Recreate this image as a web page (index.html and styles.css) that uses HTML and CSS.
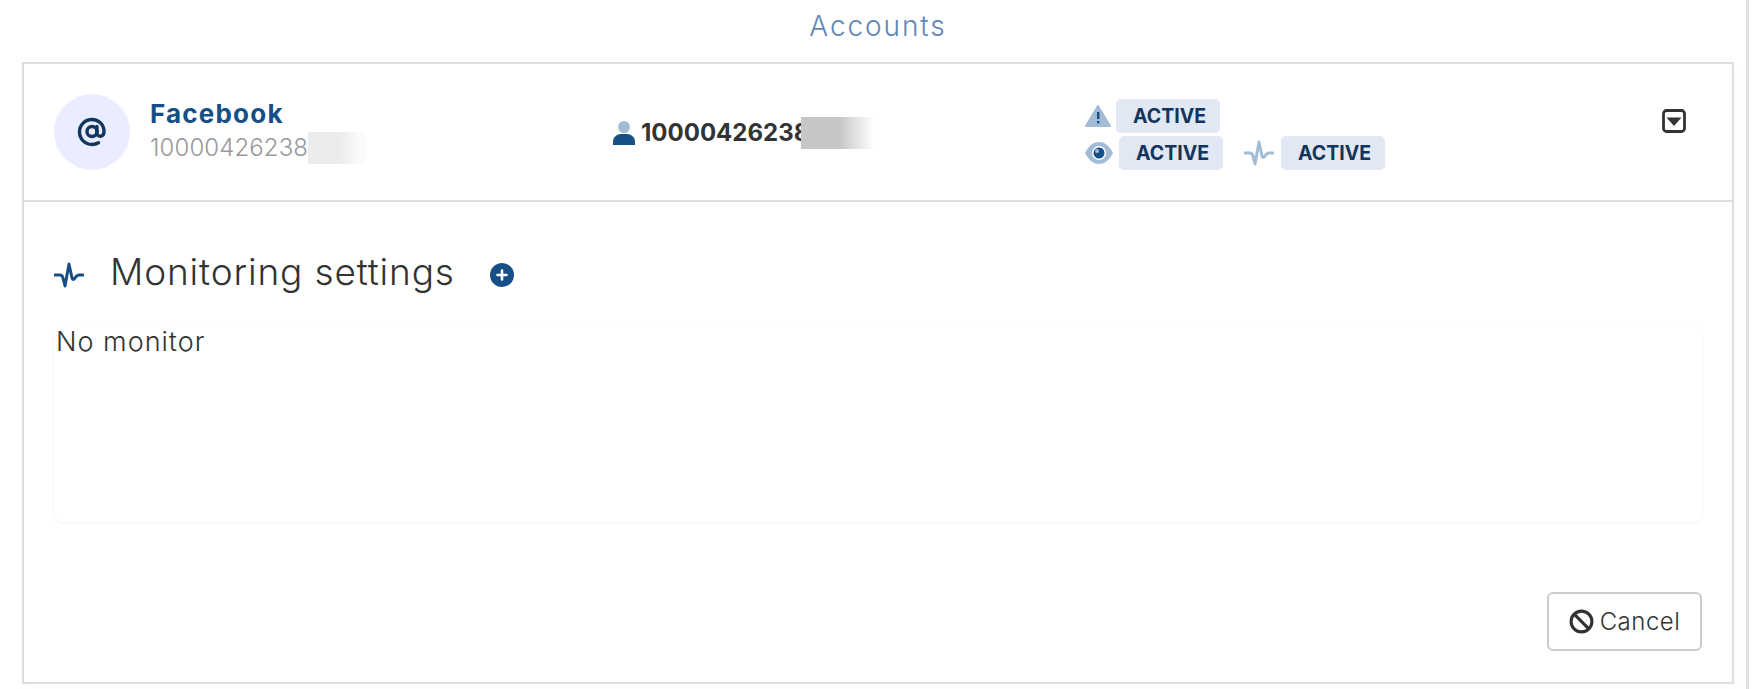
FILE: index.html
```html
<!DOCTYPE html>
<html lang="en">
<head>
  <meta charset="UTF-8">
  <title>Accounts</title>
  <link rel="stylesheet" href="styles.css">
</head>
<body>
  <div class="page">
    <h1 class="page-title">Accounts</h1>

    <div class="account-frame">
      <!-- Account summary -->
      <header class="account-head">
        <div class="account-name">
          <div class="avatar">
            <svg width="30" height="30" viewBox="0 0 30 30" fill="none" stroke="#12355b" stroke-width="3.4" stroke-linecap="round">
              <circle cx="15" cy="14.5" r="5"/>
              <path d="M20 9.5v6.5c0 4.5 7 4.5 7-1.5C27 7.500 21.500 2.500 15 2.500 8 2.500 2.500 8 2.500 15S8 27.500 15 27.500c2.500 0 4.500-.5 6.500-1.700"/>
            </svg>
          </div>
          <div>
            <div class="account-title">Facebook</div>
            <div class="account-id">10000426238<span class="smudge smudge-light"></span></div>
          </div>
        </div>

        <div class="account-user">
          <svg class="user-icon" width="22" height="24" viewBox="0 0 22 24">
            <circle cx="11" cy="6" r="6" fill="#a3bcd6"/>
            <path d="M0 24v-3c0-5 4-8 8-8h6c4 0 8 3 8 8v3z" fill="#164f86"/>
          </svg>
          <span class="user-number">10000426238</span><span class="smudge smudge-dark"></span>
        </div>

        <div class="account-status">
          <div class="status-row">
            <span class="status-item">
              <svg width="26" height="22" viewBox="0 0 26 22">
                <path d="M13 1L25 21H1z" fill="#a3bcd6" stroke="#a3bcd6" stroke-width="2" stroke-linejoin="round"/>
                <rect x="12" y="7" width="2.400" height="7" fill="#164f86"/>
                <rect x="12" y="16" width="2.400" height="2.400" fill="#164f86"/>
              </svg>
              <span class="badge">ACTIVE</span>
            </span>
          </div>
          <div class="status-row">
            <span class="status-item status-eye">
              <svg width="28" height="24" viewBox="0 0 28 24">
                <path d="M0 12C4 4 9 1 14 1s10 3 14 11c-4 8-9 11-14 11S4 20 0 12z" fill="#a3bcd6"/>
                <circle cx="14" cy="12" r="7" fill="#fff"/>
                <circle cx="14" cy="12" r="5.500" fill="#164f86"/>
                <circle cx="12" cy="10" r="2" fill="#a3bcd6"/>
              </svg>
              <span class="badge">ACTIVE</span>
            </span>
            <span class="status-item status-pulse">
              <svg width="30" height="26" viewBox="0 0 30 26" fill="none" stroke="#a3bcd6" stroke-width="3" stroke-linecap="round" stroke-linejoin="round">
                <path d="M1 13h5c1.500 0 2.500 1 3 3l2 8 4-22 3 14c.5 2 1.500 2 3 0 1-1.500 2-3 4-3h4"/>
              </svg>
              <span class="badge">ACTIVE</span>
            </span>
          </div>
        </div>

        <button class="toggle" aria-label="Expand">
          <svg width="24" height="24" viewBox="0 0 24 24">
            <rect x="1.500" y="1.500" width="21" height="21" rx="3" fill="none" stroke="#333" stroke-width="2.800"/>
            <path d="M4.500 8.500h15l-7.500 8.500z" fill="#333"/>
          </svg>
        </button>
      </header>

      <!-- Monitoring -->
      <section class="monitoring">
        <div class="section-head">
          <svg width="30" height="26" viewBox="0 0 30 26" fill="none" stroke="#164f86" stroke-width="3" stroke-linecap="round" stroke-linejoin="round">
            <path d="M1 13h5c1.500 0 2.500 1 3 3l2 8 4-22 3 14c.5 2 1.500 2 3 0 1-1.500 2-3 4-3h4"/>
          </svg>
          <h2 class="section-title">Monitoring settings</h2>
          <svg class="add-icon" width="24" height="24" viewBox="0 0 24 24">
            <circle cx="12" cy="12" r="12" fill="#164f86"/>
            <path d="M12 7.500v9M7.500 12h9" stroke="#fff" stroke-width="2.600" stroke-linecap="round"/>
          </svg>
        </div>

        <div class="monitor-panel">No monitor</div>

        <div class="actions">
          <button class="btn-cancel">
            <svg width="25" height="25" viewBox="0 0 24 24" fill="none" stroke="#333" stroke-width="3">
              <circle cx="12" cy="12" r="10"/>
              <path d="M5 5l14 14"/>
            </svg>
            Cancel
          </button>
        </div>
      </section>
    </div>
  </div>
</body>
</html>
```

FILE: styles.css
```css
html, body {
  margin: 0;
  padding: 0;
  background: #fff;
}

body {
  font-family: "Inter", "Noto Sans", sans-serif;
  color: #333;
}

.page {
  box-sizing: border-box;
  width: 1749px;
  height: 689px;
  padding: 0 12px 0 22px;
  border-right: 3px solid #e0e0e0;
  overflow: hidden;
}

.page-title {
  height: 62px;
  margin: 0;
  padding-top: 9px;
  box-sizing: border-box;
  text-align: center;
  font-size: 28px;
  line-height: 34px;
  font-weight: 300;
  letter-spacing: 1.9px;
  color: #5f86b8;
}

.account-frame {
  height: 622px;
  box-sizing: border-box;
  border: 2px solid #dedede;
  box-shadow: 0 3px 6px rgba(0, 0, 0, 0.02);
}

.account-head {
  display: grid;
  grid-template-columns: 559px 472px 577px 1fr;
  align-items: center;
  height: 138px;
  box-sizing: border-box;
  padding-left: 30px;
  border-bottom: 2px solid #dedede;
}

.account-name {
  display: flex;
  align-items: center;
  gap: 20px;
}

.avatar {
  display: flex;
  align-items: center;
  justify-content: center;
  width: 76px;
  height: 76px;
  border-radius: 50%;
  background: #e9edff;
}

.account-title {
  font-size: 26px;
  line-height: 36px;
  margin-top: -5px;
  font-weight: 700;
  color: #164f86;
  letter-spacing: 1.2px;
}

.account-id {
  display: flex;
  align-items: center;
  font-size: 24px;
  line-height: 32px;
  font-weight: 300;
  letter-spacing: 0.1px;
  color: #999;
}

.smudge {
  display: inline-block;
  height: 32px;
}

.smudge-light {
  width: 57px;
  background: linear-gradient(90deg, #ececec 55%, #fbfbfb 92%);
}

.smudge-dark {
  width: 76px;
  margin-left: -8px;
  background: linear-gradient(90deg, #c6c6c6 50%, #fff 96%);
}

.account-user {
  display: flex;
  align-items: center;
  padding-top: 2px;
}

.user-icon {
  margin-right: 6px;
}

.user-number {
  font-size: 24px;
  font-weight: 700;
  line-height: 30px;
  color: #333;
}

.account-status {
  display: flex;
  flex-direction: column;
  gap: 3px;
  padding-top: 4px;
}

.status-row {
  display: flex;
  gap: 21px;
}

.status-item {
  display: flex;
  align-items: center;
  gap: 5px;
}

.status-eye {
  gap: 6px;
}

.status-pulse {
  gap: 7px;
}

.badge {
  width: 104px;
  height: 34px;
  box-sizing: border-box;
  padding-left: 17px;
  border-radius: 5px;
  background: #e1e7f3;
  color: #12355b;
  font-size: 19.5px;
  font-weight: 700;
  line-height: 34px;
}

.toggle {
  width: 24px;
  height: 24px;
  margin: -22px 0 0 0;
  padding: 0;
  border: none;
  background: none;
}

.monitoring {
  padding: 51px 30px 0;
}

.section-head {
  display: flex;
  align-items: center;
  height: 44px;
}

.section-title {
  margin: 0 35px 6px 26px;
  font-size: 37px;
  line-height: 44px;
  font-weight: 300;
  letter-spacing: 0.85px;
  color: #333;
}

.monitor-panel {
  height: 195px;
  margin-top: 30px;
  padding: 0 2px;
  border-radius: 8px;
  box-shadow: 0 1px 3px rgba(0, 0, 0, 0.06);
  font-size: 27px;
  line-height: 30px;
  font-weight: 300;
  letter-spacing: 1px;
}

.actions {
  display: flex;
  justify-content: flex-end;
  margin-top: 70px;
}

.btn-cancel {
  display: flex;
  align-items: center;
  justify-content: center;
  gap: 6px;
  width: 155px;
  height: 59px;
  border: 2px solid #ccc;
  border-radius: 6px;
  background: #fff;
  color: #333;
  font-family: inherit;
  font-size: 24px;
  font-weight: 300;
  letter-spacing: 0.5px;
}
```
